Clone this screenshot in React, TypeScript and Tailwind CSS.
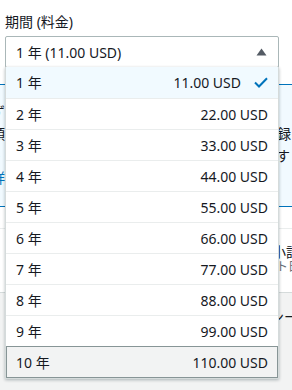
const years = Array.from({ length: 10 }, (_, i) => ({
  label: `${i + 1} 年`,
  price: `${((i + 1) * 11).toFixed(2)} USD`,
}));

function Caret() {
  return (
    <svg width="11" height="8" viewBox="0 0 11 8" className="text-[#545b64]">
      <path d="M0.5 7.5 L5.5 0.5 L10.5 7.5 Z" fill="currentColor" />
    </svg>
  );
}

function Check() {
  return (
    <svg width="14" height="11" viewBox="0 0 14 11" fill="none">
      <path d="M1 5.5 L5 9.5 L13 1.2" stroke="#0073bb" strokeWidth="2" />
    </svg>
  );
}

export default function App() {
  return (
    <div
      className="relative h-[390px] w-[292px] overflow-hidden bg-white text-[14px] text-[#16191f]"
      style={{ fontFamily: '"Noto Sans", "Noto Sans CJK JP", sans-serif' }}
    >
      <div className="w-[279px] pl-[5px] pt-3">
        <div className="leading-5">期間 (料金)</div>
        <div className="relative z-10 mt-1">
          <div className="flex h-[32px] items-center justify-between rounded-[2px] border border-[#aab7b8] bg-white pl-[10px] pr-[11px]">
            <span>1 年 (11.00 USD)</span>
            <Caret />
          </div>
          <ul className="absolute left-0 right-0 top-[31px] border border-t-0 border-[#d5dbdb] bg-white shadow-[0_1px_3px_rgba(0,28,36,0.3)]">
            {years.map((y, i) => {
              const first = i === 0;
              const last = i === years.length - 1;
              return (
                <li
                  key={y.label}
                  className={
                    first
                      ? "flex h-[31px] items-center justify-between bg-[#f1faff] pl-[10px] pr-[10px]"
                      : last
                        ? "flex h-[32px] items-center justify-between border border-[#879596] bg-[#f2f3f3] pl-[9px] pr-[9px]"
                        : "flex h-[31px] items-center justify-between border-t border-[#eaeded] pl-[10px] pr-[10px]"
                  }
                >
                  <span>{y.label}</span>
                  <span className="flex items-center gap-[13px]">
                    {y.price}
                    {first && <Check />}
                  </span>
                </li>
              );
            })}
          </ul>
        </div>
      </div>

      <div className="mt-4 h-[123px] overflow-hidden border-y border-[#0073bb] bg-[#f1faff] pt-[16px] leading-[22px]">
        <div className="-ml-[9px] flex justify-between">
          <span>ず</span>
          <span />
        </div>
        <div className="-ml-[9px] flex justify-between">
          <span>頭</span>
          <span className="mr-[1px]">録</span>
        </div>
        <div className="-ml-[9px] flex justify-between">
          <span>・</span>
          <span className="mr-[2px]">す</span>
        </div>
        <div className="-ml-[9px] flex justify-between">
          <span className="text-[#0073bb]">詳</span>
          <span />
        </div>
      </div>

      <div className="h-[21px]" />
      <div className="h-[64px] overflow-hidden border-t border-[#eaeded] pt-[15px]">
        <div className="-mr-[8px] flex justify-end leading-[16px]">小計</div>
        <div className="-mr-[8px] flex justify-end text-[12px] leading-[14px] text-[#687078]">ト日</div>
      </div>
      <div className="h-[200px] border-t border-[#d5dbdb] bg-[#f2f3f3] pt-[14px]">
        <div className="-mr-[6px] flex justify-end leading-5">ンー</div>
      </div>
    </div>
  );
}
